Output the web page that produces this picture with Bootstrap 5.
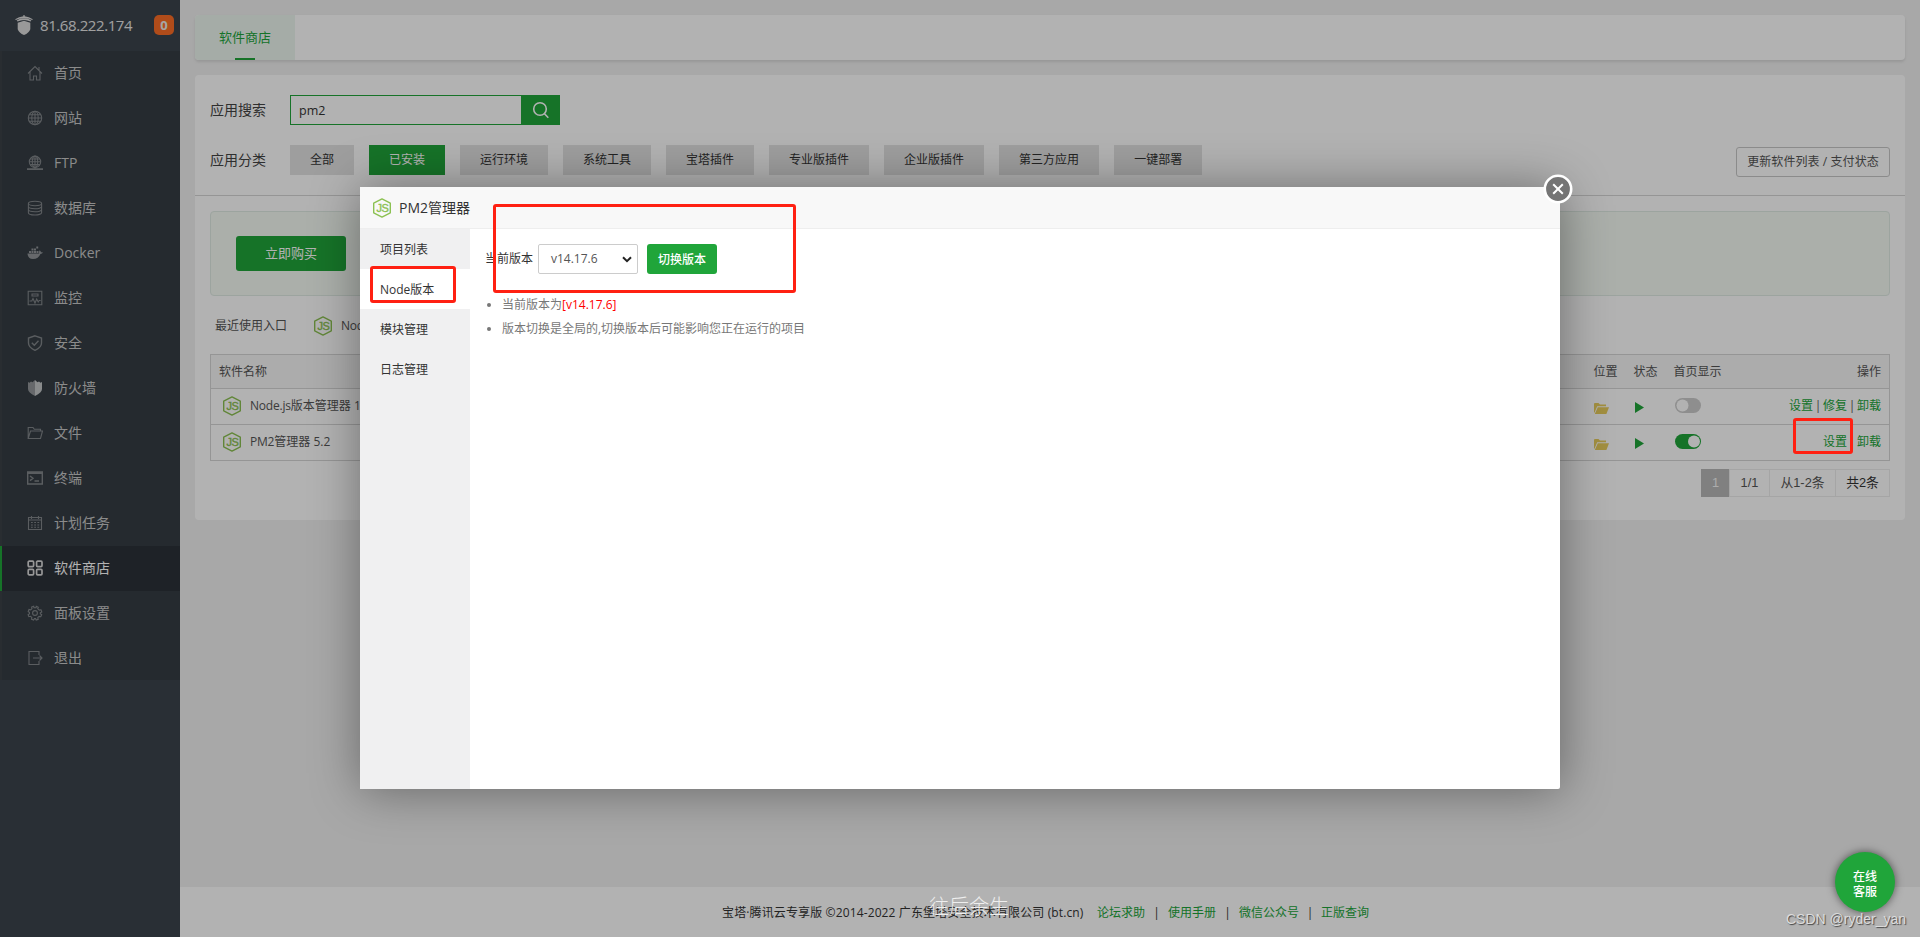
<!DOCTYPE html>
<html lang="zh-CN">
<head>
<meta charset="utf-8">
<meta name="viewport" content="width=device-width, initial-scale=1">
<title>软件商店</title>
<link href="https://cdn.jsdelivr.net/npm/bootstrap@5.3.0/dist/css/bootstrap.min.css" rel="stylesheet">
<style>
:root{--bt:#20a53a}
body{font:12px/20px "Open Sans","Noto Sans CJK SC",sans-serif;color:#555;background:#f1f1f1;height:937px;overflow:hidden;position:relative}
a{text-decoration:none;color:var(--bt)}
.lt{letter-spacing:-.2px}
/* sidebar */
.side{width:180px;background:#3c444d}
.side-top{height:51px;padding:0 6px 1px 15px;color:#e6e6e6;font-size:15px}
.side-top svg{margin-top:-1px}
.side-top .ip{letter-spacing:-.42px;margin-left:7px;margin-top:-1px}
.msg{width:20px;height:20px;border-radius:5px;background:#fc6d26;color:#eee;font-size:13px;font-weight:700;line-height:20px;text-align:center}
.menu a{height:45px;padding:0 0 1px 25px;border-left:2px solid #3b4147;background:#353d44;color:#c8c8c8;font-size:14px}
.menu a:last-child{height:44px}
.menu a svg{width:16px;height:16px;margin-right:11px;fill:none;stroke:#82868a;stroke-width:1.1}
.menu a.active{background:#2c3138;border-left-color:var(--bt);color:#fff}
.menu a.active svg{stroke:#d8d8d8;stroke-width:1.7}
/* main */
.content{padding:15px}
.tabs-bar{height:45px;border-radius:4px;box-shadow:0 2px 3px rgba(0,0,0,.1);overflow:hidden;background:#fff}
.tabs-bar a{width:100px;height:45px;background:#edf7f0;font-size:13px;line-height:45px;text-align:center;position:relative}
.tabs-bar a::after{content:"";position:absolute;left:40px;bottom:0;width:20px;height:2px;background:var(--bt)}
.panel{height:445px;margin-top:15px;border-radius:4px;background:#fff}
.filters{height:121px;padding:20px 15px 0;border-bottom:1px solid #d6d6d6}
.cats{margin-top:20px}
.lab{width:80px;font-size:14px;line-height:30px;color:#444}
.find{width:231px;height:30px;border:1px solid var(--bt);border-right:0;padding:2px 8px 0;font-size:12.5px;color:#333;line-height:25px}
.find-btn{width:39px;height:30px;background:var(--bt)}
.cat{height:30px;line-height:30px;padding:0 20px;background:#e2e2e2;color:#333}
.cat.active{background:var(--bt);color:#fff}
.upd{height:30px;line-height:27px;width:154px;margin-top:2px;text-align:center;border:1px solid #c8c8c8;border-radius:3px;color:#555;letter-spacing:.08px}
.promo{height:85px;margin:15px 15px 0;padding-left:25px;border:1px solid #e0ebe4;border-radius:4px;background:#f5fbf4}
.buy{width:110px;height:35px;line-height:35px;background:var(--bt);color:#fff;font-size:13px;text-align:center;border-radius:3px}
.recent{height:58px;padding:2px 20px 0}
.soft{width:1680px;margin:0 15px;table-layout:fixed;border:1px solid #d6d6d6;border-collapse:collapse}
.soft th{height:34px;font-weight:400;background:#f6f6f6;padding:0 8px}
.soft td{height:36px;padding:0 8px 1px;border-top:1px solid #d6d6d6}
.soft svg{display:block}
.sep{display:inline-block;width:10px;text-align:center}
.pager{margin:8px 15px 0;font-family:"Liberation Sans","Noto Sans CJK SC",sans-serif;font-size:12.8px}
.pager span{height:28px;line-height:25px;border:1px solid #ececec;margin-left:-1px;text-align:center}
.pager .on{background:#b8b8b8;border-color:#b8b8b8;color:#f6f6f6}
.foot{height:50px;background:#fff;color:#333;padding-top:1px}
/* layers */
.shade{position:absolute;inset:0;background:rgba(0,0,0,.3)}
.dlg{position:absolute;left:360px;top:187px;width:1200px;height:602px;background:#fff;border-radius:2px;box-shadow:1px 1px 50px rgba(0,0,0,.4)}
.dlg-head{height:42px;background:#f8f8f8;border-bottom:1px solid #eee;padding-left:12px;color:#333;font-size:14px}
.dlg-nav{width:110px;background:#f0f0f1}
.dlg-nav a{height:40px;line-height:42px;padding-left:20px;color:#333}
.dlg-nav a.active{background:#fff}
.dlg-body{padding:15px;color:#555}
.ver{width:100px;height:30px;border:1px solid #ccc;border-radius:2px;padding:0 5px 0 12px;color:#555}
.sw{width:70px;height:30px;line-height:31px;border-radius:3px;background:var(--bt);color:#fff;text-align:center;font-weight:500}
.tips{margin:19px 0 0;padding-left:17px;line-height:24px;color:#777}
.shut{position:absolute;left:1183px;top:-13px}
.redbox{position:absolute;border:3px solid #ff2012;border-radius:3px}
.help{position:absolute;left:1835px;top:852px;width:60px;height:60px;border-radius:50%;background:var(--bt);color:#fff;line-height:15px;font-weight:500;box-shadow:0 0 8px rgba(0,0,0,.55);padding-top:3px}
.wm1{position:absolute;left:929px;top:893px;font-size:20px;line-height:28px;color:#eee;font-weight:300}
.wm2{position:absolute;left:1786px;top:908px;font:14px/22px "Liberation Sans",sans-serif;color:#dcdcdc;text-shadow:1px 1px 1px #444;white-space:nowrap}
</style>
</head>
<body>
<svg width="0" height="0" class="position-absolute">
  <symbol id="njs" viewBox="0 0 20 20"><path d="M10 .9 18.300 5.200v9.600L10 19.100 1.700 14.800V5.200z" fill="none" stroke="#8cc152" stroke-width="1.400" stroke-linejoin="round"/><text x="10.300" y="14" text-anchor="middle" font-family="Liberation Sans,sans-serif" font-size="11" fill="#8cc152" stroke="#8cc152" stroke-width=".4" letter-spacing="-.5">JS</text></symbol>
  <symbol id="fold" viewBox="0 0 15 11"><path d="M0 10V1q0-1 1-1h3.500l1.500 1.500h6V3.300H3.200L.8 9zM3.800 4.300H15L12.400 11H.8z" fill="#e9cd5c"/></symbol>
</svg>
<div class="d-flex h-100">
  <nav class="side flex-shrink-0">
    <div class="side-top d-flex align-items-center">
      <svg width="18" height="20" viewBox="0 0 18 20" fill="#dcdcdc"><path d="M8.400 0h1.200v1.300Q14 1.700 17.800 4.200L17.200 5Q9 .8.8 5L.2 4.200Q4 1.700 8.400 1.300zM9 3.300q4.500 0 7.300 2.200l-.8 1Q9 3.500 2.500 6.500l-.8-1q3-2.200 7.300-2.200zM9 5.800l6.300 2v6.400Q14 18 9 20 4 18 2.700 14.200V7.800z"/></svg>
      <span class="ip">81.68.222.174</span><span class="msg ms-auto">0</span>
    </div>
    <div class="menu">
      <a class="d-flex align-items-center" href="#"><svg viewBox="0 0 16 16"><path d="M1 8.500 8 1.500l7 7M3 7v8h3.500v-4h3v4H13V7M12 2v3.500"/></svg>首页</a>
      <a class="d-flex align-items-center" href="#"><svg viewBox="0 0 16 16"><circle cx="8" cy="8" r="6.700"/><ellipse cx="8" cy="8" rx="3.200" ry="6.700"/><path d="M8 1.300v13.400M1.300 8h13.400M2.400 4.700h11.200M2.400 11.300h11.200"/></svg>网站</a>
      <a class="d-flex align-items-center" href="#"><svg viewBox="0 0 16 16"><circle cx="8" cy="6.800" r="5.700"/><ellipse cx="8" cy="6.800" rx="2.700" ry="5.700"/><path d="M8 1v13M2.300 6.800h11.400M3.200 4h9.600M3.200 9.600h9.600"/><path d="M0 14.200h16M6 14.200h4" stroke-width="1.800"/></svg>FTP</a>
      <a class="d-flex align-items-center" href="#"><svg viewBox="0 0 16 16"><ellipse cx="8" cy="3.500" rx="6.600" ry="2.200"/><path d="M1.400 3.500v9.200c0 3 13.200 3 13.200 0V3.500M1.400 6.500c0 3 13.200 3 13.200 0M1.400 9.500c0 3 13.200 3 13.200 0"/></svg>数据库</a>
      <a class="d-flex align-items-center" href="#"><svg viewBox="0 0 16 16"><path d="M.5 8.500h11.800q-.7-1.800.4-3.200 1.200.8 1.300 2 1.300-.2 2 .3-.7 1.400-2.600 1.400Q11.500 14 6 14 .8 14 .5 8.500zM2 6h2v2H2zM4.500 6h2v2h-2zM7 6h2v2H7zM9.500 6h2v2h-2zM7 3.600h2v2H7zM4.500 3.600h2v2h-2zM9.300 1.500h1.900v1.900H9.300z" fill="#92969a" stroke="none"/></svg><span>Docker</span></a>
      <a class="d-flex align-items-center" href="#"><svg viewBox="0 0 16 16"><path d="M1.200 1.200h13.600v13.600H1.200zM5 4h6v2H5zM2.500 11h2.300L6 8.500l2 4.500 1.700-4 1.500 3 1-1.500h1.500"/></svg>监控</a>
      <a class="d-flex align-items-center" href="#"><svg viewBox="0 0 16 16" style="stroke-width:1.400"><path d="M8 .8 14.500 3v5q0 4.500-6.500 7.300Q1.500 12.500 1.500 8V3zM4.800 7.800l2.500 2.400 4.200-4.400"/></svg>安全</a>
      <a class="d-flex align-items-center" href="#"><svg viewBox="0 0 16 16"><path d="M8 0v16Q1 12.500 1 9V2l1.500.8L4 1.500l1.500.8z" fill="#92969a" stroke="none"/><path d="M8 0v16q7-3.500 7-7V2l-1.500.8L12 1.500l-1.500.8z" fill="#c4c7c9" stroke="none"/></svg>防火墙</a>
      <a class="d-flex align-items-center" href="#"><svg viewBox="0 0 16 16"><path d="M1.200 13.500V2.500H6l1.300 1.800h6.200V6M1.200 13.500 3.500 6h12l-2 7.500z"/></svg>文件</a>
      <a class="d-flex align-items-center" href="#"><svg viewBox="0 0 16 16" style="stroke-width:1.400"><path d="M.7 2h14.600v12H.7zM.7 3.200h14.600M3 6l3 2.300-3 2.300M7.500 11h4.500"/></svg>终端</a>
      <a class="d-flex align-items-center" href="#"><svg viewBox="0 0 16 16"><path d="M1.500 2.500h13v12h-13zM1.500 5h13M4.500 1v3M11.500 1v3"/><path d="M4 7.500h8.500M4 10h8.500M4 12.300h8.500" stroke-dasharray="1.800 1.400"/></svg>计划任务</a>
      <a class="d-flex align-items-center active" href="#"><svg viewBox="0 0 16 16"><rect x="1.200" y="1.200" width="5.400" height="5.400" rx="1"/><rect x="9.600" y="1.200" width="5.400" height="5.400" rx="1"/><rect x="1.200" y="9.400" width="5.400" height="5.400" rx="1"/><rect x="9.600" y="9.400" width="5.400" height="5.400" rx="1"/></svg>软件商店</a>
      <a class="d-flex align-items-center" href="#"><svg viewBox="0 0 16 16"><circle cx="8" cy="8" r="2.400"/><path d="m6.700 1.300.3 1.500h2l.3-1.500 2 .9-.6 1.400 1.600 1.500 1.700-.3.8 2.100-1.500.9v1l1.400 1-.9 1.900-1.700-.3-1.300 1.300.4 1.600-2 .8L8.500 13.600h-1l-1 1.500-2-.9.4-1.600L3.600 11.300l-1.700.4-.8-2L2.500 8.800V7.500L1.200 6.500l.8-2 1.700.4L5 3.600l-.4-1.500z"/></svg>面板设置</a>
      <a class="d-flex align-items-center" href="#"><svg viewBox="0 0 16 16"><path d="M12 5V1.500H2v13h10V11M6 8h9M12.500 5.500 15 8l-2.500 2.500"/></svg>退出</a>
    </div>
  </nav>
  <main class="flex-grow-1 d-flex flex-column">
    <div class="content flex-grow-1">
      <div class="tabs-bar d-flex"><a href="#">软件商店</a></div>
      <section class="panel">
        <div class="filters">
          <div class="d-flex align-items-center"><span class="lab">应用搜索</span><div class="find">pm2</div>
            <div class="find-btn d-flex align-items-center justify-content-center"><svg width="18" height="18" viewBox="0 0 18 18" fill="none" stroke="#fff" stroke-width="1.600"><circle cx="8" cy="8" r="6.300"/><path d="m12.300 12.500 4 4.300"/></svg></div></div>
          <div class="cats d-flex align-items-start"><span class="lab">应用分类</span>
            <div class="d-flex" style="gap:15px"><span class="cat">全部</span><span class="cat active">已安装</span><span class="cat">运行环境</span><span class="cat">系统工具</span><span class="cat">宝塔插件</span><span class="cat">专业版插件</span><span class="cat">企业版插件</span><span class="cat">第三方应用</span><span class="cat">一键部署</span></div>
            <span class="upd ms-auto">更新软件列表 / 支付状态</span></div>
        </div>
        <div class="promo d-flex align-items-center"><a class="buy" href="#">立即购买</a></div>
        <div class="recent d-flex align-items-center"><span style="width:98px">最近使用入口</span><svg width="20" height="20"><use href="#njs"/></svg><span class="ms-1 ps-1 lt">Node.js</span></div>
        <table class="soft">
          <colgroup><col><col style="width:40px"><col style="width:40px"><col style="width:80px"><col style="width:144px"></colgroup>
          <tr><th>软件名称</th><th>位置</th><th>状态</th><th>首页显示</th><th class="text-end">操作</th></tr>
          <tr><td><div class="d-flex align-items-center"><svg class="me-2" style="margin-left:3px" width="20" height="20"><use href="#njs"/></svg><span><span class="lt">Node.js</span>版本管理器 1</span></div></td>
            <td><svg width="15" height="15" class="pt-1"><use href="#fold" width="15" height="11"/></svg></td>
            <td><svg width="11" height="14"><path d="M1 3v11l9-5.500z" fill="#20a53a"/></svg></td>
            <td><svg width="28" height="18"><rect x="1" y="1" width="26" height="15" rx="7.500" fill="#ccc"/><circle cx="8.500" cy="8.500" r="6" fill="#fff"/></svg></td>
            <td class="text-end"><a href="#">设置</a><span class="sep">|</span><a href="#">修复</a><span class="sep">|</span><a href="#">卸载</a></td></tr>
          <tr><td><div class="d-flex align-items-center"><svg class="me-2" style="margin-left:3px" width="20" height="20"><use href="#njs"/></svg><span><span class="lt">PM2</span>管理器 5.2</span></div></td>
            <td><svg width="15" height="15" class="pt-1"><use href="#fold" width="15" height="11"/></svg></td>
            <td><svg width="11" height="14"><path d="M1 3v11l9-5.500z" fill="#20a53a"/></svg></td>
            <td><svg width="28" height="18"><rect x="1" y="1" width="26" height="15" rx="7.500" fill="#20a53a"/><circle cx="20" cy="8.500" r="6" fill="#fff"/></svg></td>
            <td class="text-end"><a href="#">设置</a><span class="sep">|</span><a href="#">卸载</a></td></tr>
        </table>
        <div class="pager d-flex justify-content-end"><span class="on" style="width:29px">1</span><span style="width:41px">1/1</span><span style="width:67px">从1-2条</span><span style="width:55px;color:#333">共2条</span></div>
      </section>
    </div>
    <footer class="foot d-flex align-items-center"><div class="d-flex" style="margin-left:542px;white-space:pre"><span style="width:375px;letter-spacing:.13px">宝塔·腾讯云专享版 ©2014-2022 广东堡塔安全技术有限公司 (bt.cn)</span><a href="#">论坛求助</a><span class="text-center" style="width:23px">|</span><a href="#">使用手册</a><span class="text-center" style="width:23px">|</span><a href="#">微信公众号</a><span class="text-center" style="width:22px">|</span><a href="#">正版查询</a></div></footer>
  </main>
</div>
<div class="shade"></div>
<div class="dlg d-flex flex-column">
  <div class="dlg-head d-flex align-items-center"><svg width="20" height="20" style="margin-right:7px"><use href="#njs"/></svg><span>PM2管理器</span></div>
  <div class="d-flex flex-grow-1">
    <nav class="dlg-nav d-flex flex-column"><a href="#">项目列表</a><a class="active" href="#"><span>Node</span>版本</a><a href="#">模块管理</a><a href="#">日志管理</a></nav>
    <div class="dlg-body">
      <div class="d-flex align-items-center"><span style="width:53px;color:#333">当前版本</span>
        <div class="ver d-flex align-items-center justify-content-between"><span>v14.17.6</span><svg width="10" height="7" viewBox="0 0 10 7" fill="none" stroke="#222" stroke-width="2"><path d="m1 1.200 4 4 4-4"/></svg></div>
        <span class="sw" style="margin-left:9px">切换版本</span></div>
      <ul class="tips"><li>当前版本为<span style="color:red">[v14.17.6]</span></li><li>版本切换是全局的,切换版本后可能影响您正在运行的项目</li></ul>
    </div>
  </div>
  <svg class="shut" width="30" height="30" viewBox="0 0 30 30"><circle cx="15" cy="15" r="13.200" fill="#757575" stroke="#fff" stroke-width="2.600"/><path d="m10.200 10.200 9.600 9.600m0-9.600-9.600 9.600" stroke="#fff" stroke-width="2"/></svg>
</div>
<div class="redbox" style="left:370px;top:266px;width:86px;height:37px"></div>
<div class="redbox" style="left:493px;top:204px;width:303px;height:89px"></div>
<div class="redbox" style="left:1793px;top:418px;width:60px;height:36px"></div>
<div class="help d-flex flex-column align-items-center justify-content-center"><span>在线</span><span>客服</span></div>
<div class="wm1">往后余生</div>
<div class="wm2">CSDN @ryder_yan</div>
<script src="https://cdn.jsdelivr.net/npm/bootstrap@5.3.0/dist/js/bootstrap.bundle.min.js"></script>
</body>
</html>
